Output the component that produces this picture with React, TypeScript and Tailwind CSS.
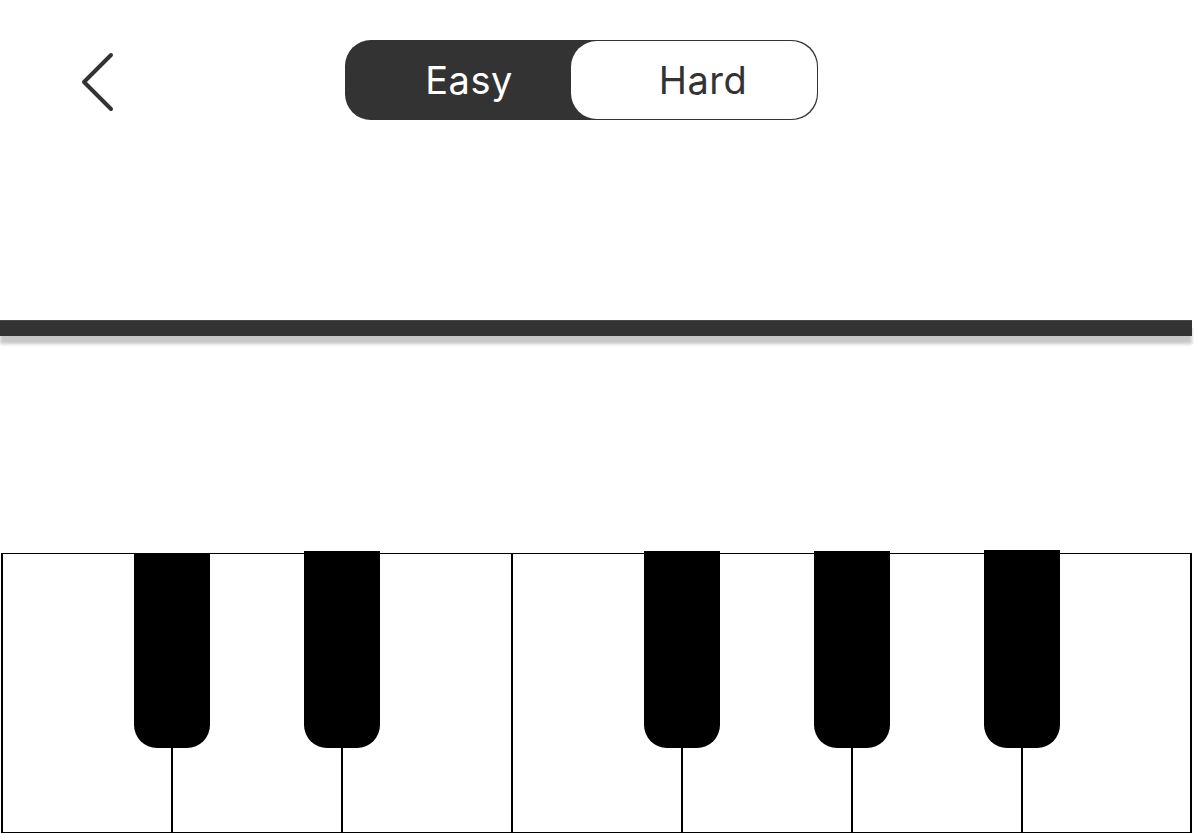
import React from "react";

const whiteKeys = ["C", "D", "E", "F", "G", "A", "B"];

// black keys, placed over the white ones (offsets from the keyboard's inner edge)
const blackKeys = [
    { pos: "left-[131px] top-[-1px] h-[195px]" },
    { pos: "left-[301px] top-[-3px] h-[197px]" },
    { pos: "left-[641px] top-[-3px] h-[197px]" },
    { pos: "left-[811px] top-[-3px] h-[197px]" },
    { pos: "left-[981px] top-[-4px] h-[198px]" },
];

function BackChevron() {
    return (
        <svg width="40" height="64" viewBox="0 0 40 64" fill="none">
            <path
                d="M31 5 L4 32 L31 59"
                stroke="#333333"
                strokeWidth="4"
                strokeLinecap="round"
                strokeLinejoin="round"
            />
        </svg>
    );
}

function LevelToggle() {
    return (
        <div className="flex w-[473px] h-[80px] rounded-[26px] bg-[#333333] font-['Inter','Noto_Sans',sans-serif] text-[38px] tracking-[0.5px]">
            <div className="w-[226px] flex items-center justify-center pl-[22px] text-white">
                Easy
            </div>
            <div className="flex-1 my-[1px] mr-[1px] rounded-[26px] bg-white flex items-center justify-center pl-[18px] text-[#333333]">
                Hard
            </div>
        </div>
    );
}

function Keyboard() {
    return (
        <div className="relative ml-[1px] w-[1191px] h-[280px] flex border-y border-x-[2px] border-black">
            {whiteKeys.map((key, i) => (
                <div
                    key={key}
                    className={`h-full bg-white ${i < whiteKeys.length - 1 ? "w-[170px] border-r-[2px] border-black" : "flex-1"}`}
                />
            ))}
            {blackKeys.map((k, i) => (
                <div
                    key={i}
                    className={`absolute ${k.pos} w-[76px] bg-black rounded-b-[23px]`}
                />
            ))}
        </div>
    );
}

export default function App() {
    return (
        <div className="w-[1194px] h-[834px] bg-white overflow-hidden flex flex-col">
            <div className="flex items-start pt-[40px] h-[120px]">
                <div className="ml-[80px] mt-[10px] w-[40px]">
                    <BackChevron />
                </div>
                <div className="ml-[225px]">
                    <LevelToggle />
                </div>
            </div>

            <div className="mt-[200px] w-[1192px] h-[16px] bg-[#333333] border-t border-[#4a4a4a] shadow-[0_8px_3px_rgba(0,0,0,0.22)]" />

            <div className="mt-[217px]">
                <Keyboard />
            </div>
        </div>
    );
}
